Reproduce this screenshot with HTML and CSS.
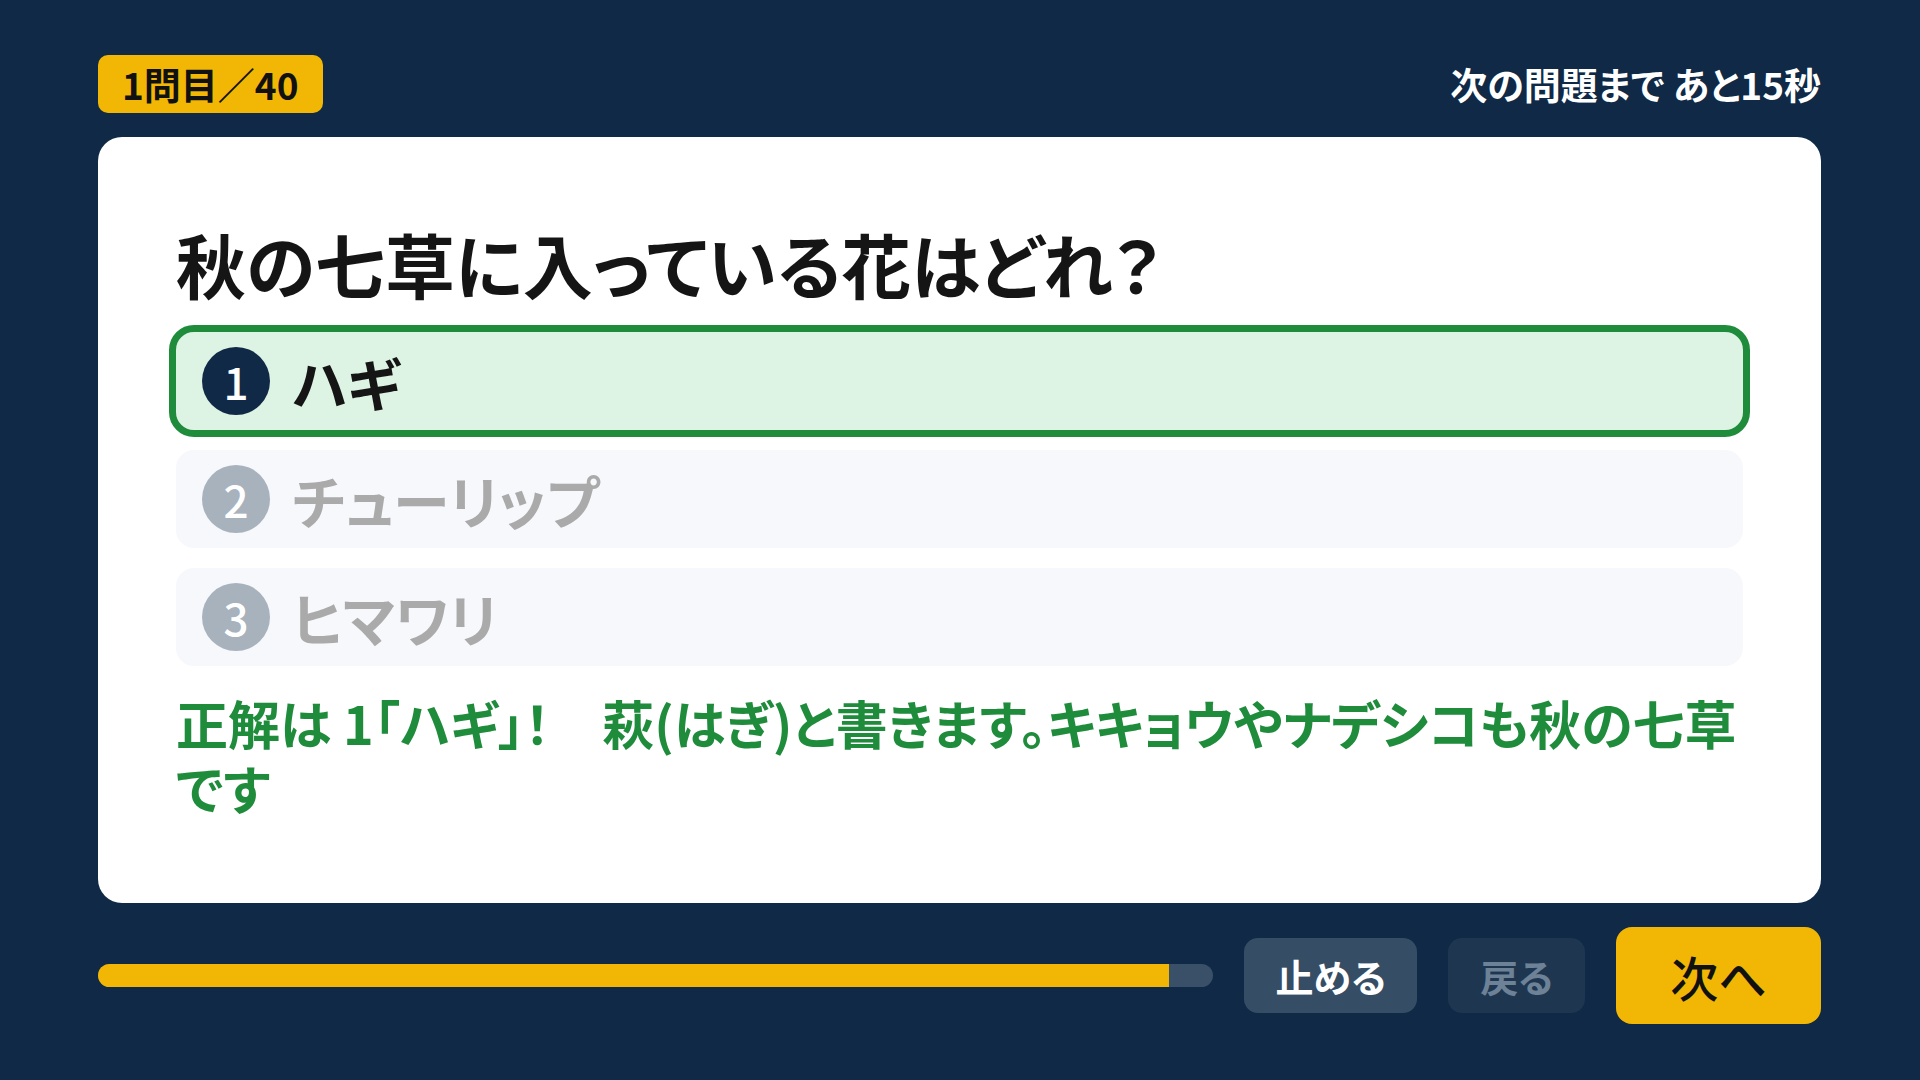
FILE: index.html
```html
<!DOCTYPE html>
<html lang="ja">
	<head>
		<meta charset="UTF-8" />
		<meta name="viewport" content="width=device-width, initial-scale=1.0" />
		<title>クイズ</title>
		<link rel="stylesheet" href="styles.css">
	</head>
	<body>
		<div class="screen">
			<header class="topbar">
				<span class="badge">1問目／40</span>
				<span class="timer">次の問題まで あと15秒</span>
			</header>

			<main class="card">
				<h1 class="question">秋の七草に入っている花はどれ？</h1>
				<ol class="choices">
					<li class="choice is-correct">
						<span class="num">1</span>
						<span class="label">ハギ</span>
					</li>
					<li class="choice">
						<span class="num">2</span>
						<span class="label">チューリップ</span>
					</li>
					<li class="choice">
						<span class="num">3</span>
						<span class="label">ヒマワリ</span>
					</li>
				</ol>
				<p class="explain">正解は 1「ハギ」！　萩(はぎ)と書きます。キキョウやナデシコも秋の七草です</p>
			</main>

			<footer class="controls">
				<div class="progress">
					<div class="progress-fill" style="width: 96%"></div>
				</div>
				<button class="btn btn-stop">止める</button>
				<button class="btn btn-back" disabled>戻る</button>
				<button class="btn btn-next">次へ</button>
			</footer>
		</div>
	</body>
</html>
```

FILE: styles.css
```css
body {
	margin: 0;
	background: #0f2946;
	font-family: "Noto Sans CJK JP", "Noto Sans", sans-serif;
	font-feature-settings: "palt";
}
.screen {
	height: 1080px;
	box-sizing: border-box;
	padding: 55px 99px 56px 98px;
	display: flex;
	flex-direction: column;
	gap: 24px;
}
.topbar {
	display: flex;
	justify-content: space-between;
	align-items: center;
	height: 58px;
}
.badge {
	background: #f2b705;
	color: #111;
	font-size: 37px;
	font-weight: 700;
	line-height: 58px;
	padding: 0 24px;
	border-radius: 10px;
}
.timer {
	color: #fff;
	font-size: 37px;
	font-weight: 700;
}
.card {
	flex: 1;
	background: white;
	border-radius: 24px;
	padding: 0 78px;
	display: flex;
	flex-direction: column;
	justify-content: center;
}
.question {
	margin: 0 0 24px;
	font-size: 70px;
	line-height: 88px;
	font-weight: 700;
	color: #151515;
}
.choices {
	list-style: none;
	margin: 0;
	padding: 0;
	display: flex;
	flex-direction: column;
	gap: 20px;
}
.choice {
	height: 98px;
	box-sizing: border-box;
	padding: 0 26px;
	display: flex;
	align-items: center;
	gap: 22px;
	background: #f6f8fc;
	border-radius: 18px;
	font-size: 57px;
	font-weight: 700;
	color: #aaa;
}
.choice.is-correct {
	background: #ddf3e3;
	outline: 7px solid #1f8c3c;
	color: #151515;
}
.num {
	width: 68px;
	height: 68px;
	border-radius: 50%;
	background: #a8b2bd;
	color: white;
	font-size: 44px;
	font-weight: 500;
	display: flex;
	align-items: center;
	justify-content: center;
}
.is-correct .num {
	background: #0f2946;
}
.explain {
	margin: 24px 0 0;
	font-size: 52px;
	line-height: 65px;
	font-weight: 700;
	color: #1f8c3c;
}
.controls {
	display: flex;
	align-items: center;
	gap: 31px;
	height: 97px;
}
.progress {
	flex: 1;
	height: 23px;
	border-radius: 12px;
	background: #3a5068;
	overflow: hidden;
}
.progress-fill {
	height: 100%;
	background: #f2b705;
}
.btn {
	border: none;
	font-family: inherit;
	font-feature-settings: "palt";
	cursor: pointer;
	border-radius: 14px;
	height: 75px;
	padding: 0 31px;
	font-size: 38px;
	font-weight: 700;
}
.btn-stop {
	background: #364d66;
	color: white;
}
.btn-back {
	padding: 0 32px;
	background: #1f3651;
	color: #6d8296;
}
.btn-next {
	height: 97px;
	padding: 0 54px;
	border-radius: 16px;
	background: #f2b705;
	color: #111;
	font-size: 48px;
	font-weight: 500;
}
```
